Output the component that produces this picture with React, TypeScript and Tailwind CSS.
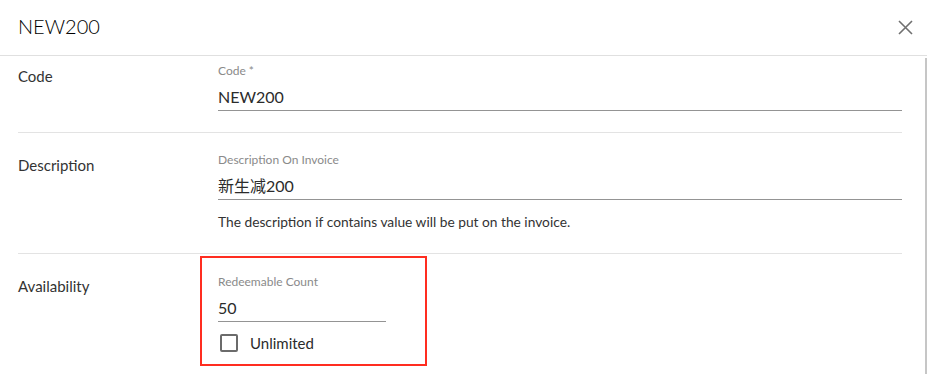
import type { ReactNode } from "react";

type FieldProps = {
  label: string;
  value: string;
  helper?: string;
  className?: string;
};

function TextField({ label, value, helper, className = "" }: FieldProps) {
  return (
    <div className={className}>
      <p className="text-[12px] leading-4 text-[#8a8a8a]">{label}</p>
      <div className="mt-[6px] border-b border-[#949494] pb-[1px]">
        <p className="text-[16px] leading-6 text-[#2b2b2b]">{value}</p>
      </div>
      {helper ? (
        <p className="mt-[12px] text-[13.75px] leading-5 text-[#333]">{helper}</p>
      ) : null}
    </div>
  );
}

function Row({
  label,
  children,
  className = "",
  labelTop,
}: {
  label: string;
  children: ReactNode;
  className?: string;
  labelTop: string;
}) {
  return (
    <div className={`flex border-b border-[#e3e3e3] ${className}`}>
      <div className={`w-[200px] shrink-0 ${labelTop}`}>
        <p className="text-[15px] leading-5 text-[#333]">{label}</p>
      </div>
      <div className="min-w-0 flex-1">{children}</div>
    </div>
  );
}

export default function App() {
  return (
    <div
      className="flex h-[374px] w-[927px] flex-col overflow-hidden bg-white"
      style={{ fontFamily: "Lato, 'Noto Sans CJK SC', sans-serif" }}
    >
      <header className="flex h-[56px] shrink-0 items-center justify-between border-b border-[#e0e0e0] pl-[18px] pr-[10px]">
        <h1 className="pb-[3px] text-[20px] font-light leading-7 text-black">NEW200</h1>
        <button type="button" aria-label="Close" className="flex h-6 w-6 items-center justify-center">
          <svg width="15" height="15" viewBox="0 0 15 15" fill="none">
            <path d="M1 1L14 14M14 1L1 14" stroke="#707070" strokeWidth="1.6" />
          </svg>
        </button>
      </header>

      <div className="flex min-h-0 flex-1">
        <div className="min-w-0 flex-1 pl-[18px] pr-[22px]">
          <Row label="Code" labelTop="pt-[10px]" className="h-[77px]">
            <TextField label="Code *" value="NEW200" className="pt-[7px]" />
          </Row>

          <Row label="Description" labelTop="pt-[22px]" className="h-[121px]">
            <TextField
              label="Description On Invoice"
              value="新生减200"
              helper="The description if contains value will be put on the invoice."
              className="pt-[19px]"
            />
          </Row>

          <div className="flex">
            <div className="w-[200px] shrink-0 pt-[22px]">
              <p className="text-[15px] leading-5 text-[#333]">Availability</p>
            </div>
            <div className="-ml-[18px] mt-[2px] w-[227px] border-2 border-[#ff2d20] pb-[11px] pl-[16px] pr-[39px] pt-[16px]">
              <TextField label="Redeemable Count" value="50" />
              <label className="mt-[11px] flex items-center gap-[12px]">
                <span className="ml-[2px] h-[18px] w-[18px] rounded-[2px] border-2 border-[#6b6b6b]" />
                <span className="text-[15px] leading-5 text-[#2b2b2b]">Unlimited</span>
              </label>
            </div>
          </div>
        </div>
        <div className="w-[3px] shrink-0 pt-[2px]">
          <div className="ml-[1px] h-full w-[2px] bg-[#c6c6c6]" />
        </div>
      </div>
    </div>
  );
}
